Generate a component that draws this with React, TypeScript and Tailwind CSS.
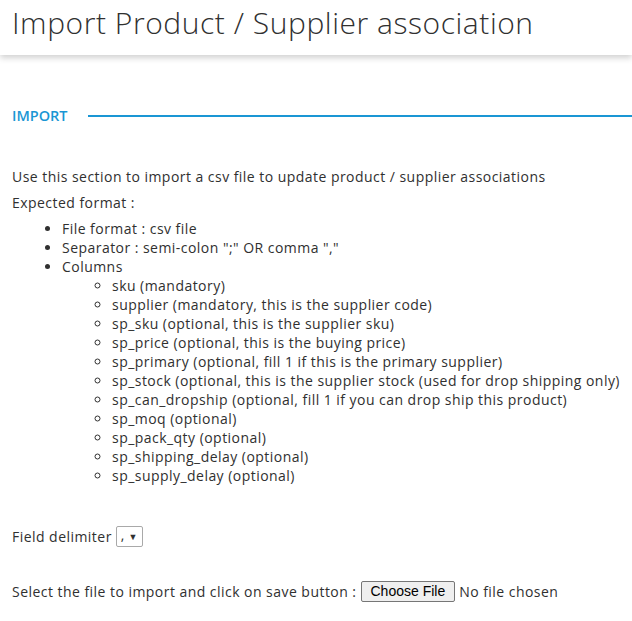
const columns = [
  "sku (mandatory)",
  "supplier (mandatory, this is the supplier code)",
  "sp_sku (optional, this is the supplier sku)",
  "sp_price (optional, this is the buying price)",
  "sp_primary (optional, fill 1 if this is the primary supplier)",
  "sp_stock (optional, this is the supplier stock (used for drop shipping only)",
  "sp_can_dropship (optional, fill 1 if you can drop ship this product)",
  "sp_moq (optional)",
  "sp_pack_qty (optional)",
  "sp_shipping_delay (optional)",
  "sp_supply_delay (optional)",
];

export default function App() {
  return (
    <div className="min-h-screen bg-white text-[#303030] font-['Open_Sans',sans-serif]">
      <header className="h-[55px] bg-white px-3 flex items-center shadow-[0_3px_6px_rgba(0,0,0,0.18)]">
        <h1 className="text-[30px] font-light leading-none tracking-[0.55px] -mt-[10px]">
          Import Product / Supplier association
        </h1>
      </header>

      <main className="px-3">
        <div className="mt-[54px] flex items-center gap-5">
          <h2 className="text-[#1a96d4] text-[14.5px] font-semibold leading-none">IMPORT</h2>
          <div className="flex-1 h-[2px] bg-[#1a96d4] -mr-3" />
        </div>

        <div className="mt-[43px] text-[14px] leading-[19px] tracking-[0.46px]">
          <p>Use this section to import a csv file to update product / supplier associations</p>
          <p className="mt-[7px]">Expected format :</p>
          <ul className="list-disc pl-[50px] mt-[7px]">
            <li>File format : csv file</li>
            <li>Separator : semi-colon ";" OR comma ","</li>
            <li>
              Columns
              <ul className="list-[circle] pl-[50px]">
                {columns.map((c) => (
                  <li key={c}>{c}</li>
                ))}
              </ul>
            </li>
          </ul>

          <div className="mt-[41px] flex items-center gap-1">
            <span>Field delimiter</span>
            <div className="h-[21px] w-[27px] border border-[#a9a9a9] rounded-[2px] flex items-center justify-between px-[4px]">
              <span className="-mt-[3px]">,</span>
              <span className="text-[9px]">▼</span>
            </div>
          </div>

          <div className="mt-[34px] flex items-center gap-1">
            <span>Select the file to import and click on save button :</span>
            <button className="h-[21px] px-[9px] bg-[#efefef] border border-[#767676] rounded-[2px] text-[14px] tracking-normal font-['Liberation_Sans',sans-serif] text-black leading-none">
              Choose File
            </button>
            <span>No file chosen</span>
          </div>
        </div>
      </main>
    </div>
  );
}
